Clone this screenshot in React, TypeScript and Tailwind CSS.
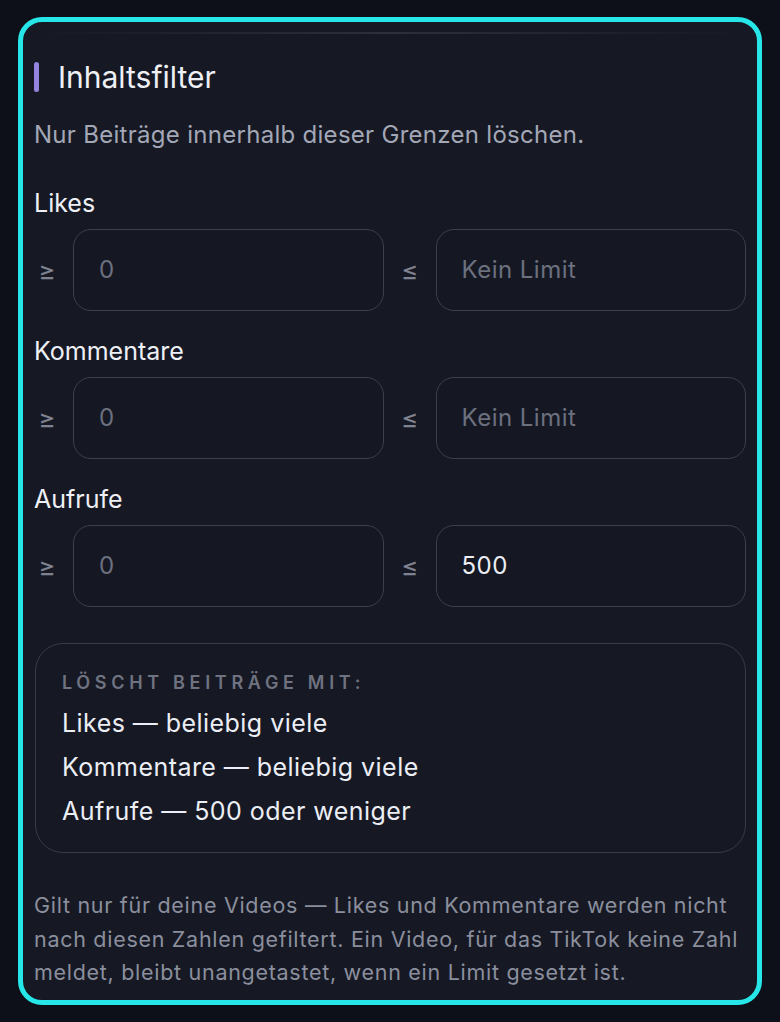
import React from 'react';

type Row = { label: string; min: string; max: string };

const rows: Row[] = [
  { label: 'Likes', min: '', max: '' },
  { label: 'Kommentare', min: '', max: '' },
  { label: 'Aufrufe', min: '', max: '500' },
];

const summary = ['Likes — beliebig viele', 'Kommentare — beliebig viele', 'Aufrufe — 500 oder weniger'];

const Field: React.FC<{ value: string; placeholder: string }> = ({ value, placeholder }) => (
  <div className="h-[82px] rounded-[18px] border-[1.5px] border-[#3d404c] bg-[#151823] flex items-center pl-[25px] text-[24px] tracking-[0.02em]">
    {value ? (
      <span className="text-[#eceef4]">{value}</span>
    ) : (
      <span className="text-[#6c707f]">{placeholder}</span>
    )}
  </div>
);

const App: React.FC = () => {
  return (
    <div className="min-h-[1022px] bg-[#0d1018] pt-[17px] px-[18px] font-['Inter','Noto_Sans',sans-serif]">
      <div className="rounded-[24px] border-[5px] border-[#27e6e8] bg-[#161924] px-[11px] pb-[10px]">
        {/* divider from the previous section */}
        <div className="mt-[10px] mx-[4px] h-[2px] bg-gradient-to-r from-transparent via-[#2d303c] to-transparent" />

        {/* Heading */}
        <div className="mt-[25px] flex items-center">
          <span className="w-[5px] h-[30px] rounded-full bg-[#9583e0]" />
          <h2 className="ml-[19px] text-[30px] leading-[36px] text-[#eef0f6]">Inhaltsfilter</h2>
        </div>
        <p className="mt-[25px] text-[24px] leading-[30px] tracking-[0.012em] text-[#a3a7b6]">
          Nur Beiträge innerhalb dieser Grenzen löschen.
        </p>

        {/* Filter rows */}
        <div className="mt-[38px] flex flex-col gap-[25px]">
          {rows.map((row) => (
            <div key={row.label}>
              <div className="text-[25px] leading-[30px] text-[#eef0f6]">{row.label}</div>
              <div className="mt-[11px] grid grid-cols-[26px_1fr_26px_1fr] gap-[13px] items-center">
                <span className="text-center text-[26px] text-[#7f8391]">≥</span>
                <Field value={row.min} placeholder="0" />
                <span className="text-center text-[26px] text-[#7f8391]">≤</span>
                <Field value={row.max} placeholder="Kein Limit" />
              </div>
            </div>
          ))}
        </div>

        {/* Summary */}
        <div className="mt-[36px] ml-px rounded-[28px] border-[1.5px] border-[#393c48] pl-[26px] pt-[27px] pb-[19px]">
          <div className="text-[18px] leading-[24px] font-semibold tracking-[0.26em] text-[#6f7381]">
            LÖSCHT BEITRÄGE MIT:
          </div>
          <div className="mt-[6px]">
            {summary.map((line) => (
              <div key={line} className="text-[25px] leading-[44px] tracking-[0.018em] text-[#eceef5]">
                {line}
              </div>
            ))}
          </div>
        </div>

        {/* Footnote */}
        <p className="mt-[36px] text-[21.5px] leading-[33.5px] tracking-[0.033em] text-[#8b8f9d] whitespace-nowrap">
          Gilt nur für deine Videos — Likes und Kommentare werden nicht
          <br />
          nach diesen Zahlen gefiltert. Ein Video, für das TikTok keine Zahl
          <br />
          meldet, bleibt unangetastet, wenn ein Limit gesetzt ist.
        </p>
      </div>
    </div>
  );
};

export default App;
